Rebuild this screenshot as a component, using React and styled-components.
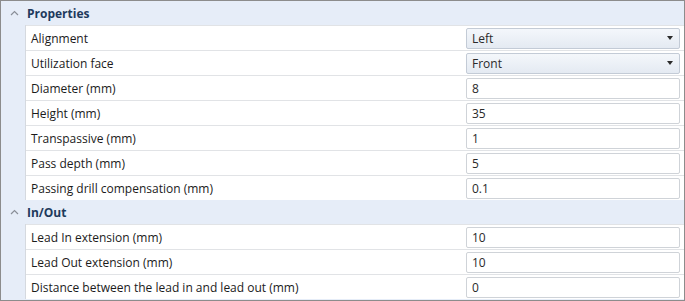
import React from "react";
import styled, { createGlobalStyle } from "styled-components";

const GlobalStyle = createGlobalStyle`
  html, body {
    margin: 0;
    padding: 0;
    background: #ffffff;
  }
  body {
    font-family: "Open Sans", "Noto Sans", sans-serif;
    font-size: 12px;
    color: #1b1b1b;
  }
`;

const Grid = styled.div`
  width: 685px;
  height: 301px;
  box-sizing: border-box;
  border: 1px solid #8c8c8c;
  background: #e6edf8;
  overflow: hidden;
`;

const CategoryHeader = styled.div`
  display: flex;
  align-items: center;
  height: 24px;
  background: #e6edf8;
`;

const Chevron = styled.span`
  display: flex;
  align-items: center;
  justify-content: center;
  width: 26px;
  color: #8a8f98;
`;

const CategoryTitle = styled.span`
  font-weight: bold;
  color: #1e3a5c;
  font-size: 12px;
`;

const CategoryBody = styled.div`
  margin-left: 24px;
  border-left: 1px solid #d5d9df;
  background: #ffffff;
`;

const Row = styled.div`
  display: grid;
  grid-template-columns: 438px 1fr;
  height: 25px;
  box-sizing: border-box;
  border-top: 1px solid #e1e3e6;
`;

const NameCell = styled.div`
  display: flex;
  align-items: center;
  padding-left: 5px;
  white-space: nowrap;
`;

const ValueCell = styled.div`
  display: flex;
  align-items: center;
  padding: 0 4px 0 2px;
`;

const Field = styled.div`
  flex: 1;
  height: 21px;
  box-sizing: border-box;
  display: flex;
  align-items: center;
  padding: 0 6px 0 5px;
  border: 1px solid ${(p) => (p.$combo ? "#c3cbd6" : "#cfd3d8")};
  border-radius: 2px;
  background: ${(p) =>
    p.$combo ? "linear-gradient(#f4f7fb, #e4eaf2)" : "#ffffff"};
  color: #2a2a2a;
`;

const FieldText = styled.span`
  flex: 1;
`;

const Arrow = styled.span`
  width: 0;
  height: 0;
  border-left: 3.5px solid transparent;
  border-right: 3.5px solid transparent;
  border-top: 4px solid #2b2b2b;
`;

const ChevronIcon = () => (
  <svg width="9" height="6" viewBox="0 0 9 6">
    <polyline
      points="1,5 4.5,1.5 8,5"
      fill="none"
      stroke="currentColor"
      strokeWidth="1.2"
    />
  </svg>
);

const categories = [
  {
    title: "Properties",
    rows: [
      { name: "Alignment", value: "Left", combo: true },
      { name: "Utilization face", value: "Front", combo: true },
      { name: "Diameter (mm)", value: "8" },
      { name: "Height (mm)", value: "35" },
      { name: "Transpassive (mm)", value: "1" },
      { name: "Pass depth (mm)", value: "5" },
      { name: "Passing drill compensation (mm)", value: "0.1" },
    ],
  },
  {
    title: "In/Out",
    rows: [
      { name: "Lead In extension (mm)", value: "10" },
      { name: "Lead Out extension (mm)", value: "10" },
      { name: "Distance between the lead in and lead out (mm)", value: "0" },
    ],
  },
];

const Category = ({ title, rows }) => (
  <>
    <CategoryHeader>
      <Chevron>
        <ChevronIcon />
      </Chevron>
      <CategoryTitle>{title}</CategoryTitle>
    </CategoryHeader>
    <CategoryBody>
      {rows.map((r) => (
        <Row key={r.name}>
          <NameCell>{r.name}</NameCell>
          <ValueCell>
            <Field $combo={r.combo}>
              <FieldText>{r.value}</FieldText>
              {r.combo && <Arrow />}
            </Field>
          </ValueCell>
        </Row>
      ))}
    </CategoryBody>
  </>
);

export default function App() {
  return (
    <>
      <GlobalStyle />
      <Grid>
        {categories.map((c) => (
          <Category key={c.title} {...c} />
        ))}
      </Grid>
    </>
  );
}
